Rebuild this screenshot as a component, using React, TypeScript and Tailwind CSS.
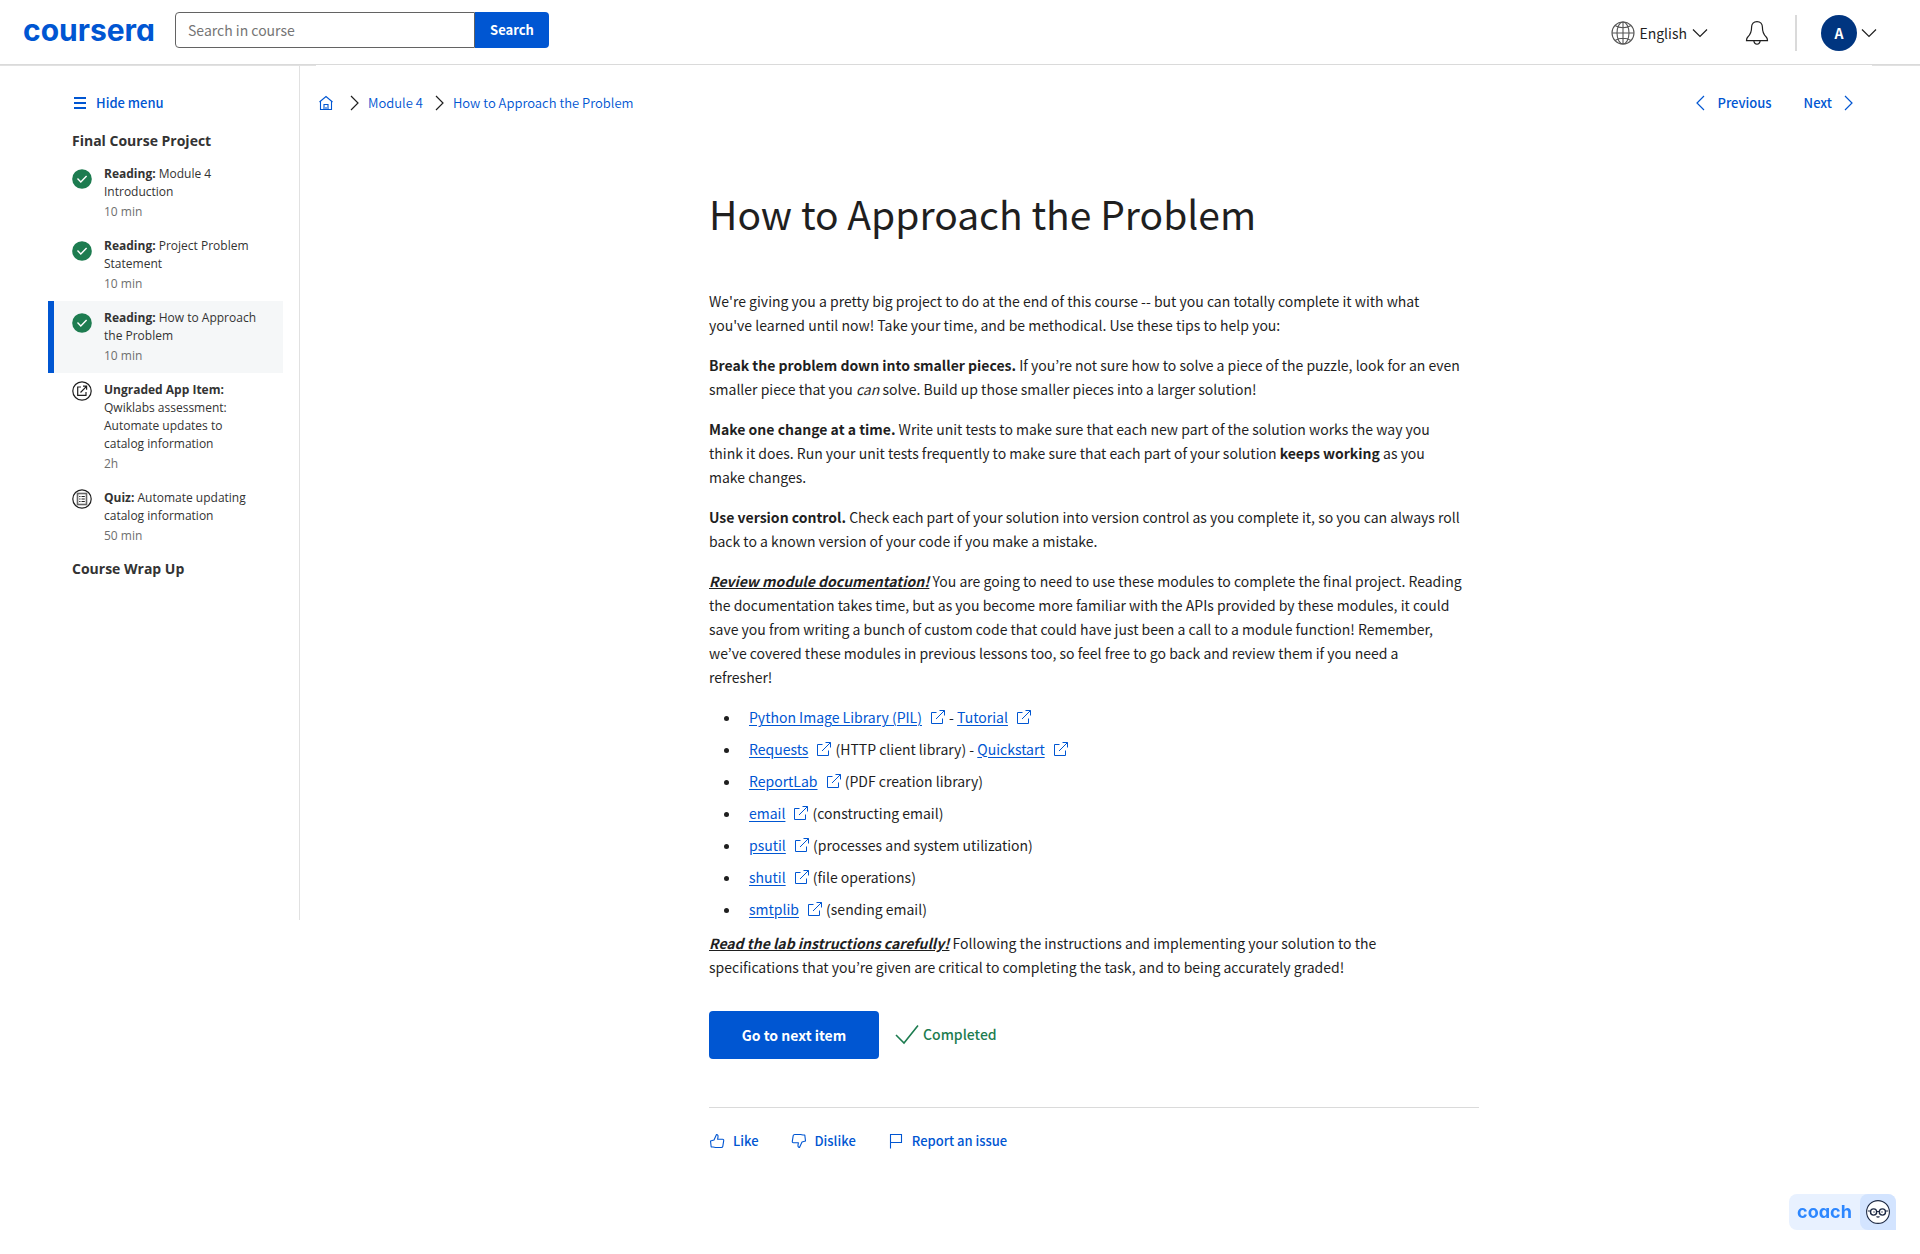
import React from "react";

type IconProps = { className?: string };

function Chevron({ dir, className = "" }: { dir: "left" | "right" | "down"; className?: string }) {
  const d = { left: "M12 2 5 9 12 16", right: "M5 2l7 7-7 7", down: "M2 5.500l7 7 7-7" }[dir];
  return (
    <svg viewBox="0 0 18 18" width="18" height="18" fill="none" stroke="currentColor" strokeWidth="1.200" className={"shrink-0 " + className} aria-hidden="true">
      <path d={d} />
    </svg>
  );
}

function GlobeIcon() {
  return (
    <svg viewBox="0 0 24 24" width="24" height="24" fill="none" stroke="#555" strokeWidth="1.100" aria-hidden="true">
      <circle cx="12" cy="12" r="11" />
      <ellipse cx="12" cy="12" rx="6" ry="11" />
      <path d="M1 12h22M12 1v22M4 4.500c4.500 3 11.500 3 16 0M4 19.500c4.500-3 11.500-3 16 0" />
    </svg>
  );
}

function BellIcon() {
  return (
    <svg viewBox="0 0 24 26" width="24" height="26" fill="none" stroke="#1f1f1f" strokeWidth="1.200" aria-hidden="true">
      <path d="M12 1.600c-3.400 0-5.400 2.400-5.400 5.400 0 5.500-1.200 7.500-3.600 9.700-1 .9-1.500 1.800-1.500 3.900h21c0-2.100-.5-3-1.500-3.900-2.400-2.200-3.600-4.200-3.600-9.700 0-3-2-5.400-5.400-5.400z" />
      <path d="M8.800 20.600c.3 2.200 1.500 3.600 3.200 3.600s2.900-1.400 3.200-3.600" />
    </svg>
  );
}

function HomeIcon() {
  return (
    <svg viewBox="0 0 16 16" width="16" height="16" fill="none" stroke="#0056d2" strokeWidth="1.100" aria-hidden="true">
      <path d="M1.500 7 8 1.500 14.500 7M2.500 6.300v8.200h11V6.300M6 14.500V9.500h4v5M8 12v2.500" />
    </svg>
  );
}

function DoneIcon() {
  return (
    <svg viewBox="0 0 20 20" width="20" height="20" aria-hidden="true">
      <circle cx="10" cy="10" r="9.800" fill="#1d7c50" />
      <path d="M5.500 9.600l3.300 3.300 5.800-6" fill="none" stroke="#fff" strokeWidth="1.400" />
    </svg>
  );
}

function AppItemIcon() {
  return (
    <svg viewBox="0 0 20 20" width="20" height="20" fill="none" stroke="#1f1f1f" strokeWidth="1.200" aria-hidden="true">
      <circle cx="10" cy="10" r="9.200" />
      <path d="M9 6H5.700v8.300H14V11M8.500 11.500l6-6.200M11 5.200h3.600v3.600" />
    </svg>
  );
}

function QuizIcon() {
  return (
    <svg viewBox="0 0 20 20" width="20" height="20" fill="none" stroke="#1f1f1f" strokeWidth="1.200" aria-hidden="true">
      <circle cx="10" cy="10" r="9.200" />
      <rect x="5.500" y="4.500" width="9" height="11" stroke="#666" strokeWidth="1.600" />
      <path d="M7.200 7.500h1.300M9.500 7.500h3.300M7.200 10h1.300M9.500 10h3.300M7.200 12.500h1.300M9.500 12.500h3.300" strokeWidth="1" />
    </svg>
  );
}

function ExternalIcon() {
  return (
    <svg viewBox="0 0 16 16" width="16" height="16" fill="none" stroke="#0056d2" strokeWidth="1" className="ml-2 inline-block align-[-2px]" aria-hidden="true">
      <path d="M6.500 3.500H1.500v11h11v-5M6 10l8.500-8.500M9.500 1.500h5v5" />
    </svg>
  );
}

function LikeIcon({ className = "" }: IconProps) {
  return (
    <svg viewBox="0 0 16 16" width="16" height="16" fill="none" stroke="#0056d2" strokeWidth="1.100" strokeLinejoin="round" className={className} aria-hidden="true">
      <path d="M4 14 2.200 14 1.500 8 5 7 7.500 1.500c1.300.2 1.700 1.200 1.500 2.300L8.600 6.300h5c1 0 1.200.6 1.100 1.400l-.9 5.600c-.2.900-.7 1.200-1.500 1.200H6.500z" />
    </svg>
  );
}

function FlagIcon() {
  return (
    <svg viewBox="0 0 16 16" width="16" height="16" fill="none" stroke="#0056d2" strokeWidth="1.100" aria-hidden="true">
      <path d="M2.500 15.500v-14h11v8h-11" />
    </svg>
  );
}

function CoachFace() {
  return (
    <svg viewBox="0 0 24 24" width="24" height="24" fill="none" stroke="#1f2a44" aria-hidden="true">
      <circle cx="12" cy="12" r="11.400" fill="#fff" strokeWidth="1.100" />
      <circle cx="7.600" cy="12" r="3.100" strokeWidth="1.400" />
      <circle cx="16.400" cy="12" r="3.100" strokeWidth="1.400" />
      <path d="M10.700 11.500h2.600M1.800 11h2.700M19.500 11h2.700M10.500 16.500c1 .7 2 .7 3 0" strokeWidth="1.200" />
      <circle cx="8" cy="12" r=".7" fill="#1f2a44" stroke="none" />
      <circle cx="16" cy="12" r=".7" fill="#1f2a44" stroke="none" />
    </svg>
  );
}

type Item = { kind: string; title: string; time: string; icon: "done" | "app" | "quiz"; active?: boolean };

const items: Item[] = [
  { kind: "Reading:", title: "Module 4 Introduction", time: "10 min", icon: "done" },
  { kind: "Reading:", title: "Project Problem Statement", time: "10 min", icon: "done" },
  { kind: "Reading:", title: "How to Approach the Problem", time: "10 min", icon: "done", active: true },
  { kind: "Ungraded App Item:", title: "Qwiklabs assessment: Automate updates to catalog information", time: "2h", icon: "app" },
  { kind: "Quiz:", title: "Automate updating catalog information", time: "50 min", icon: "quiz" },
];

function Sidebar() {
  return (
    <aside className="w-[300px] shrink-0 self-start border-r border-[#e1e1e1] pb-[341px] pl-12 pr-4 font-['Open_Sans',sans-serif] text-[#333]">
      <button className="ml-6 mt-7 flex h-5 items-center gap-2 text-[13px] font-medium text-[#0056d2] font-['Noto_Sans_CJK_KR',sans-serif]">
        <svg viewBox="0 0 16 16" width="16" height="16" stroke="currentColor" strokeWidth="2" aria-hidden="true">
          <path d="M2 3h12M2 8h12M2 13h12" />
        </svg>
        Hide menu
      </button>
      <h2 className="ml-6 mt-[18px] text-sm font-bold leading-5">Final Course Project</h2>
      <ul className="mt-[6px]">
        {items.map((it) => (
          <li key={it.title}>
            <a
              href="#"
              className={
                "flex gap-3 border-l-[6px] py-2 pl-[18px] pr-6 text-xs leading-[18px] " +
                (it.active ? "border-[#0056d2] bg-[#f5f7f8]" : "border-transparent")
              }
            >
              <span className={"shrink-0 " + (it.icon === "done" ? "pt-1" : "")}>
                {it.icon === "done" ? <DoneIcon /> : it.icon === "app" ? <AppItemIcon /> : <QuizIcon />}
              </span>
              <span>
                <strong className="font-bold">{it.kind}</strong> {it.title}
                <span className="mt-[2px] block text-[#6e6e6e]">{it.time}</span>
              </span>
            </a>
          </li>
        ))}
      </ul>
      <h2 className="ml-6 mt-[6px] text-sm font-bold leading-5">Course Wrap Up</h2>
    </aside>
  );
}

function Ext({ children }: { children: React.ReactNode }) {
  return (
    <a href="#" className="text-[#0056d2]">
      <span className="underline underline-offset-2">{children}</span>
      <ExternalIcon />
    </a>
  );
}

function Header() {
  return (
    <header className="flex h-[65px] items-start border-b border-[#dadada] pl-[23px] pr-[42px] shadow-[0_1px_0_#e1e1e1]">
      <a href="#" className="mt-[10px] w-[152px] font-['Inter',sans-serif] text-[30px] font-bold leading-10 text-[#0056d2] [font-feature-settings:'cv11']">
        coursera
      </a>
      <form className="mt-3 flex h-9">
        <input
          aria-label="Search in course"
          placeholder="Search in course"
          className="w-[300px] rounded-l-[4px] border border-[#636363] px-3 text-sm placeholder:text-[#757575]"
        />
        <button type="button" className="w-[74px] rounded-r-[4px] bg-[#0056d2] text-[13px] font-bold text-white">
          Search
        </button>
      </form>
      <div className="ml-auto mt-[15px] flex h-9 items-center">
        <button className="flex items-center gap-1 text-sm">
          <GlobeIcon />
          English
          <Chevron dir="down" />
        </button>
        <button aria-label="Notifications" className="ml-9">
          <BellIcon />
        </button>
        <span className="ml-[26px] h-9 w-[2px] bg-[#dadada]" />
        <button className="ml-6 flex items-center gap-[3px]">
          <span className="flex size-9 items-center justify-center rounded-full bg-[#003580] text-sm font-bold text-white">A</span>
          <Chevron dir="down" />
        </button>
      </div>
    </header>
  );
}

function Article() {
  return (
    <article className="mx-auto mt-[62px] w-full max-w-[770px] text-sm leading-6 [&_p]:mb-4">
      <h1 className="mb-10 text-[39px] leading-[72px]">How to Approach the Problem</h1>
      <p>
        We're giving you a pretty big project to do at the end of this course -- but you can totally complete it with what<br />
        you've learned until now! Take your time, and be methodical. Use these tips to help you:
      </p>
      <p>
        <strong>Break the problem down into smaller pieces.</strong> If you’re not sure how to solve a piece of the puzzle, look for an even<br />
        smaller piece that you <em>can</em> solve. Build up those smaller pieces into a larger solution!
      </p>
      <p>
        <strong>Make one change at a time.</strong> Write unit tests to make sure that each new part of the solution works the way you<br />
        think it does. Run your unit tests frequently to make sure that each part of your solution <strong>keeps working</strong> as you<br />
        make changes.
      </p>
      <p>
        <strong>Use version control.</strong> Check each part of your solution into version control as you complete it, so you can always roll<br />
        back to a known version of your code if you make a mistake.
      </p>
      <p>
        <strong className="italic underline">Review module documentation!</strong> You are going to need to use these modules to complete the final project. Reading<br />
        the documentation takes time, but as you become more familiar with the APIs provided by these modules, it could<br />
        save you from writing a bunch of custom code that could have just been a call to a module function! Remember,<br />
        we’ve covered these modules in previous lessons too, so feel free to go back and review them if you need a<br />
        refresher!
      </p>
      <ul className="mb-[10px] list-disc space-y-2 pl-8 [&>li]:pl-2">
        <li><Ext>Python Image Library (PIL)</Ext> - <Ext>Tutorial</Ext></li>
        <li><Ext>Requests</Ext> (HTTP client library) - <Ext>Quickstart</Ext></li>
        <li><Ext>ReportLab</Ext> (PDF creation library)</li>
        <li><Ext>email</Ext> (constructing email)</li>
        <li><Ext>psutil</Ext> (processes and system utilization)</li>
        <li><Ext>shutil</Ext> (file operations)</li>
        <li><Ext>smtplib</Ext> (sending email)</li>
      </ul>
      <p>
        <strong className="italic underline">Read the lab instructions carefully!</strong> Following the instructions and implementing your solution to the<br />
        specifications that you’re given are critical to completing the task, and to being accurately graded!
      </p>
      <div className="mt-8 flex items-center gap-4 border-b border-[#dadada] pb-12">
        <button className="h-12 w-[170px] rounded-[4px] bg-[#0056d2] font-bold text-white">Go to next item</button>
        <span className="flex items-center gap-1 pb-[2px] font-medium text-[#1d7c50]">
          <svg viewBox="0 0 24 24" width="24" height="24" fill="none" stroke="currentColor" strokeWidth="1.600" aria-hidden="true">
            <path d="M1 13l8 8L23 3.500" />
          </svg>
          Completed
        </span>
      </div>
      <div className="mt-[21px] flex gap-8 text-[13px] font-medium text-[#0056d2]">
        <button className="flex items-center gap-2"><LikeIcon />Like</button>
        <button className="flex items-center gap-2"><LikeIcon className="rotate-180" />Dislike</button>
        <button className="flex items-center gap-2"><FlagIcon />Report an issue</button>
      </div>
    </article>
  );
}

export default function App() {
  return (
    <div className="flex min-h-screen flex-col bg-white font-['Noto_Sans_CJK_KR','Noto_Sans',sans-serif] text-[#1f1f1f]">
      <Header />
      <div className="flex">
        <Sidebar />
        <main className="flex-1 pb-24 pr-8">
          <div className="ml-4 mr-4 flex items-center bg-white pl-[2px] pt-[26px] text-[13px] leading-6 text-[#0056d2]">
            <nav aria-label="Breadcrumb" className="flex items-center gap-1 font-[350]">
              <a href="#" aria-label="Home"><HomeIcon /></a>
              <Chevron dir="right" className="ml-2 text-[#1f1f1f]" />
              <a href="#">Module 4</a>
              <Chevron dir="right" className="ml-1 text-[#1f1f1f]" />
              <a href="#">How to Approach the Problem</a>
            </nav>
            <div className="ml-auto mr-[14px] flex gap-8 font-medium">
              <button className="flex items-center gap-2"><Chevron dir="left" />Previous</button>
              <button className="flex items-center gap-2">Next<Chevron dir="right" /></button>
            </div>
          </div>
          <Article />
        </main>
      </div>
      <button className="fixed bottom-6 right-6 flex h-9 w-[107px] items-stretch overflow-hidden rounded-l-[8px] rounded-tr-[8px] bg-[#e8f1ff]">
        <span className="flex flex-1 items-center justify-center font-['Inter',sans-serif] text-lg font-bold text-[#2d87ff] [font-feature-settings:'cv11']">coach</span>
        <span className="flex w-9 items-center justify-center rounded-l-[8px] bg-[#d3e4ff]"><CoachFace /></span>
      </button>
    </div>
  );
}
